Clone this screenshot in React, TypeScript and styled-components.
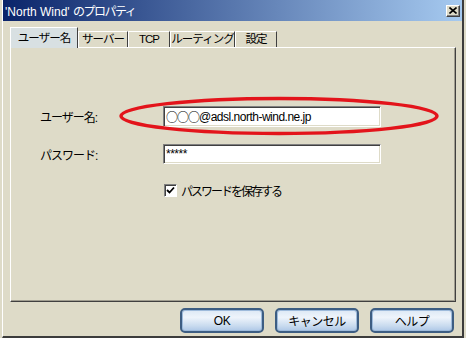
import React from 'react'
import styled, { createGlobalStyle } from 'styled-components'

const GlobalStyle = createGlobalStyle`
  html, body {
    margin: 0;
    padding: 0;
    background: #dedbc8;
  }
  body {
    font-family: "Liberation Sans", "Noto Sans CJK JP", sans-serif;
    font-size: 12px;
    color: #000;
  }
`

const tabs = [
  { label: 'ユーザー名', width: 68, active: true },
  { label: 'サーバー', width: 50 },
  { label: 'TCP', width: 42 },
  { label: 'ルーティング', width: 65 },
  { label: '設定', width: 42 },
]

const App: React.FC = () => {
  return (
    <>
      <GlobalStyle />
      <Window>
        <TitleBar>
          <Title>
            'North Wind' <TitleKana>のプロパティ</TitleKana>
          </Title>
          <CloseButton>
            <svg width="8" height="7" viewBox="0 0 8 7">
              <path d="M0.5 0.5 L7.5 6.5 M7.5 0.5 L0.5 6.5" stroke="#000" strokeWidth="1.6" />
            </svg>
          </CloseButton>
        </TitleBar>
        <TabStrip>
          {tabs.map((t) => (
            <Tab key={t.label} $w={t.width} $active={t.active}>
              {t.label}
            </Tab>
          ))}
        </TabStrip>
        <Panel>
          <Form>
            <Label>ユーザー名:</Label>
            <Field $h={21}>
              <Circles>○○○</Circles>@adsl.north-wind.ne.jp
            </Field>
            <Label>パスワード:</Label>
            <Field $h={20}>*****</Field>
            <CheckRow>
              <CheckBox>
                <svg width="9" height="9" viewBox="0 0 9 9">
                  <path d="M1 4 L3.5 6.5 L8 1.5" stroke="#000" strokeWidth="1.8" fill="none" />
                </svg>
              </CheckBox>
              <CheckLabel>パスワードを保存する</CheckLabel>
            </CheckRow>
          </Form>
          <Mark width="322" height="40" viewBox="0 0 322 40">
            <ellipse cx="161" cy="20" rx="158" ry="17.5" fill="none" stroke="#e3141b" strokeWidth="3.5" />
          </Mark>
        </Panel>
        <ButtonRow>
          <DialogButton>OK</DialogButton>
          <DialogButton>キャンセル</DialogButton>
          <DialogButton>ヘルプ</DialogButton>
        </ButtonRow>
      </Window>
    </>
  )
}

export default App

const Window = styled.div`
  margin-left: 2px;
  width: 462px;
  height: 338px;
  box-sizing: border-box;
  border-left: 1px solid #fff;
  border-right: 2px solid #3c3c3c;
  border-bottom: 2px solid #3c3c3c;
  display: flex;
  flex-direction: column;
`

const TitleBar = styled.div`
  height: 21px;
  flex-shrink: 0;
  display: flex;
  align-items: center;
  justify-content: space-between;
  padding: 0 2px 0 2px;
  background: linear-gradient(to right, #0a246a, #a6caf0);
`

const Title = styled.div`
  color: #fff;
  font-size: 12px;
  white-space: pre;
`

const TitleKana = styled.span`
  letter-spacing: -1.5px;
`

const CloseButton = styled.div`
  width: 14px;
  height: 12px;
  box-sizing: border-box;
  background: #dedbc8;
  border: 1px solid;
  border-color: #fff #404040 #404040 #fff;
  box-shadow: inset -1px -1px 0 #808080;
  display: flex;
  align-items: center;
  justify-content: center;
`

const TabStrip = styled.div`
  height: 20px;
  margin: 6px 0 0 7px;
  display: flex;
  align-items: flex-end;
`

const Tab = styled.div<{ $w: number; $active?: boolean }>`
  position: relative;
  z-index: 1;
  width: ${(p) => p.$w}px;
  height: ${(p) => (p.$active ? 21 : 16)}px;
  margin-bottom: ${(p) => (p.$active ? -1 : 0)}px;
  box-sizing: border-box;
  background: ${(p) => (p.$active ? '#d8e0e2' : '#dedbc8')};
  border-top: 1px solid #fff;
  border-left: 1px solid #fff;
  border-right: 1px solid #404040;
  display: flex;
  align-items: flex-end;
  justify-content: center;
  padding-bottom: ${(p) => (p.$active ? 3 : 1)}px;
  font-size: 11.5px;
  line-height: 14px;
  letter-spacing: -1px;
  white-space: nowrap;
`

const Panel = styled.div`
  position: relative;
  flex: 1;
  margin: 0 6px 0 7px;
  border-top: 1px solid #fff;
  border-left: 1px solid #fff;
  border-right: 1px solid #404040;
  border-bottom: 1px solid #404040;
  box-shadow: inset -1px -1px 0 #a09d90;
  padding: 58px 0 0 29px;
`

const Form = styled.div`
  display: grid;
  grid-template-columns: 123px 218px;
  row-gap: 17px;
  align-items: center;
`

const Label = styled.div`
  font-size: 12px;
  letter-spacing: -1px;
`

const Field = styled.div<{ $h: number }>`
  height: ${(p) => p.$h}px;
  box-sizing: border-box;
  background: #fff;
  border: 1px solid;
  border-color: #808080 #fff #fff #808080;
  box-shadow: inset 1px 1px 0 #404040, inset -1px -1px 0 #dedbc8;
  padding-left: 2px;
  display: flex;
  align-items: center;
  font-size: 12px;
  letter-spacing: -0.5px;
`

const Circles = styled.span`
  font-family: "Noto Sans CJK JP", sans-serif;
  letter-spacing: -1px;
`

const CheckRow = styled.div`
  grid-column: 2;
  margin-top: 1px;
  margin-left: 1px;
  display: flex;
  align-items: center;
  gap: 4px;
`

const CheckBox = styled.div`
  width: 13px;
  height: 13px;
  box-sizing: border-box;
  background: #fff;
  border: 1px solid;
  border-color: #808080 #fff #fff #808080;
  box-shadow: inset 1px 1px 0 #404040;
  display: flex;
  align-items: center;
  justify-content: center;
`

const CheckLabel = styled.div`
  font-size: 12px;
  letter-spacing: -2px;
`

const Mark = styled.svg`
  position: absolute;
  left: 107px;
  top: 48px;
`

const ButtonRow = styled.div`
  display: flex;
  justify-content: flex-end;
  gap: 11px;
  padding: 6px 8px 3px 0;
`

const DialogButton = styled.div`
  width: 84px;
  height: 25px;
  box-sizing: border-box;
  border: 2px solid #3d5d82;
  border-radius: 5px;
  background: linear-gradient(to bottom, #dce8f5 0%, #eef4fb 35%, #c9dbef 75%, #adc7e6 100%);
  box-shadow: inset 0 0 0 1px #9dbadb;
  display: flex;
  align-items: center;
  justify-content: center;
  font-size: 12px;
  letter-spacing: -0.5px;
`
